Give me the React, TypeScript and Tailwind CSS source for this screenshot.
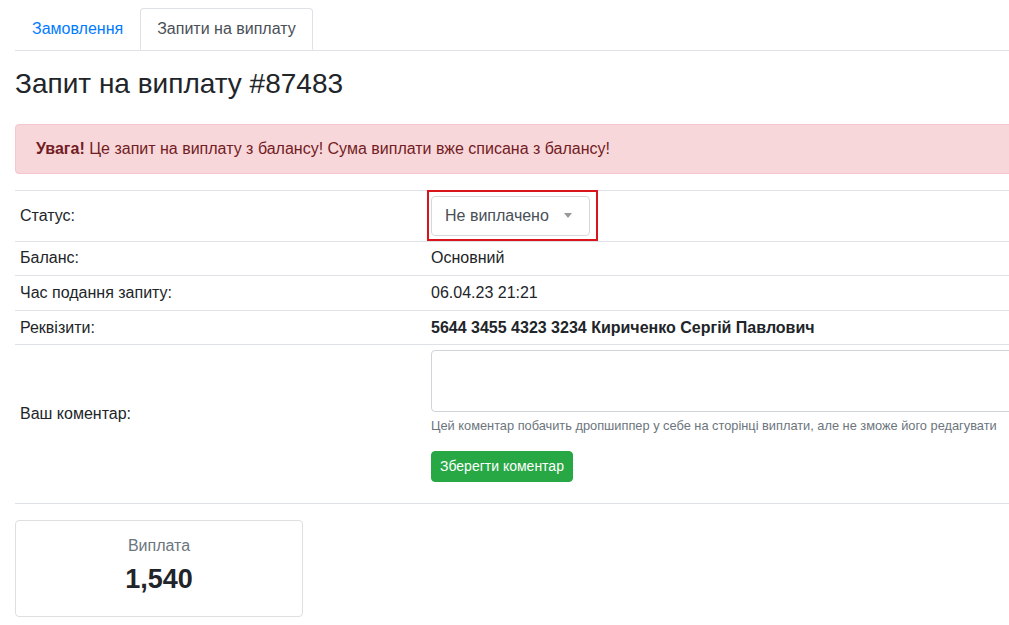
import React from 'react';

const rows = [
  { label: 'Баланс:', value: 'Основний' },
  { label: 'Час подання запиту:', value: '06.04.23 21:21' },
];

const App = () => {
  return (
    <div className="min-h-screen overflow-hidden bg-white font-['Liberation_Sans',Arial,sans-serif] text-base text-[#212529]">
      <div className="ml-[15px] w-[1120px]">
        {/* tabs */}
        <ul className="mt-[8px] flex border-b border-[#dee2e6]">
          <li>
            <a href="#orders" className="block border border-transparent px-4 py-2 leading-6 text-[#007bff]">
              Замовлення
            </a>
          </li>
          <li className="-mb-px">
            <a href="#payouts" className="block rounded-t border border-[#dee2e6] border-b-white bg-white px-4 py-2 leading-6 text-[#495057]">
              Запити на виплату
            </a>
          </li>
        </ul>

        <h3 className="mt-[16px] text-[28px] leading-[1.2]">Запит на виплату #87483</h3>

        <div className="mt-[23px] rounded border border-[#f5c6cb] bg-[#f8d7da] px-5 py-3 leading-6 text-[#721c24]">
          <strong>Увага!</strong> Це запит на виплату з балансу! Сума виплати вже списана з балансу!
        </div>

        <table className="mt-4 w-full border-collapse">
          <tbody>
            <tr className="border-t border-[#dee2e6]">
              <td className="w-[411px] px-[5px] py-[5px] align-middle leading-6">Статус:</td>
              <td className="px-[5px] py-[5px]">
                <div className="relative w-fit">
                  <button className="flex h-[40px] w-[159px] items-center justify-between rounded border border-[#d6d9dc] bg-white pl-[13px] pr-[17px] text-[#495057]">
                    <span>Не виплачено</span>
                    <span className="h-0 w-0 border-x-[4px] border-t-[5px] border-x-transparent border-t-[#999]" />
                  </button>
                  <div className="pointer-events-none absolute -left-[4px] -right-[8px] -top-[6px] -bottom-[5px] border-2 border-[#d9141b]" />
                </div>
              </td>
            </tr>
            {rows.map((r) => (
              <tr key={r.label} className="border-t border-[#dee2e6]">
                <td className="px-[5px] py-[4.8px] leading-6">{r.label}</td>
                <td className="px-[5px] py-[4.8px] leading-6">{r.value}</td>
              </tr>
            ))}
            <tr className="border-t border-[#dee2e6]">
              <td className="px-[5px] py-[4.8px] leading-6">Реквізити:</td>
              <td className="px-[5px] py-[4.8px] font-bold leading-6">
                5644 3455 4323 3234 Кириченко Сергій Павлович
              </td>
            </tr>
            <tr className="border-y border-[#dee2e6]">
              <td className="px-[5px] pb-[25px] pt-[4.8px] align-middle leading-6">Ваш коментар:</td>
              <td className="px-[5px] py-[4.8px]">
                <div className="mb-4">
                  <textarea className="block h-[62px] w-full resize-none rounded border border-[#ced4da] px-3 py-1.5" />
                  <small className="mt-1 block text-[12.8px] leading-[1.5] text-[#6c757d]">
                    Цей коментар побачить дропшиппер у себе на сторінці виплати, але не зможе його редагувати
                  </small>
                </div>
                <button className="mb-4 rounded border border-[#28a745] bg-[#28a745] px-2 py-1 text-sm leading-[1.5] text-white">
                  Зберегти коментар
                </button>
              </td>
            </tr>
          </tbody>
        </table>

        {/* payout card */}
        <div className="mt-4 w-[288px] rounded border border-[#dfdfdf] pb-[20px] pt-[13px] text-center">
          <div className="leading-6 text-[#6c757d]">Виплата</div>
          <div className="mt-[5px] text-[27px] font-bold leading-[1.2]">1,540</div>
        </div>
      </div>
    </div>
  );
};

export default App;
